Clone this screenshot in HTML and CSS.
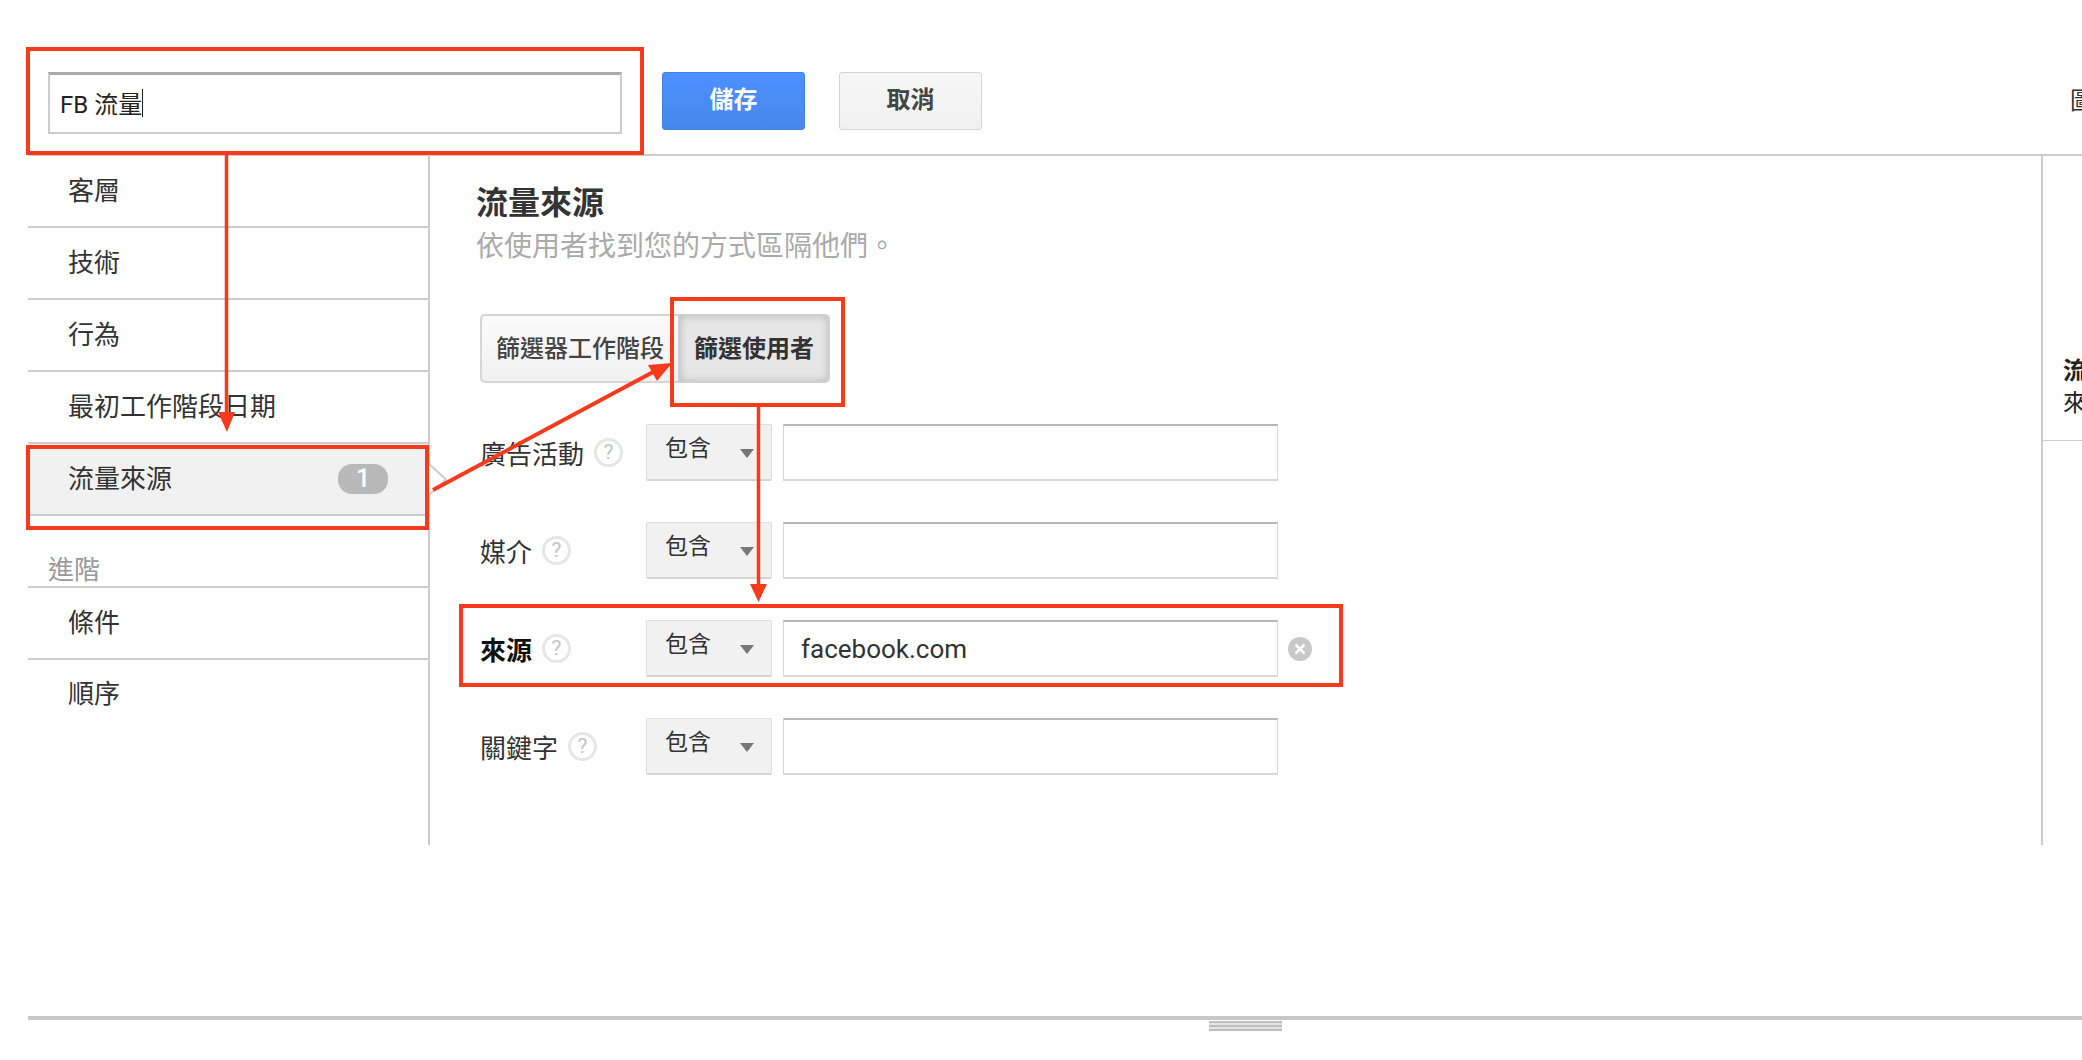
FILE: index.html
```html
<!DOCTYPE html>
<html>
	<head>
		<meta charset="utf-8">
		<title>區隔 - 流量來源</title>
		<link rel="stylesheet" href="styles.css">
	</head>
	<body>
		<div class="topbar">
			<div class="name-input">FB 流量<span class="caret"></span></div>
			<div class="btn btn-save">儲存</div>
			<div class="btn btn-cancel">取消</div>
			<div class="top-cut">圖表</div>
		</div>
		<div class="content">
			<div class="sidebar">
				<div class="side-item">客層</div>
				<div class="side-item">技術</div>
				<div class="side-item">行為</div>
				<div class="side-item">最初工作階段日期</div>
				<div class="side-item selected">
					流量來源
					<span class="badge">1</span>
					<svg class="pointer" width="20" height="35" viewBox="0 0 20 35">
						<polyline points="0,1 18,17.5 0,34" fill="#fff" stroke="#ccc" stroke-width="2"/>
					</svg>
				</div>
				<div class="side-heading">進階</div>
				<div class="side-item">條件</div>
				<div class="side-item last">順序</div>
			</div>
			<div class="main">
				<h1 class="title">流量來源</h1>
				<p class="subtitle">依使用者找到您的方式區隔他們。</p>
				<div class="segmented">
					<div class="seg seg-sessions">篩選器工作階段</div>
					<div class="seg seg-users">篩選使用者</div>
				</div>
				<div class="rows">
					<div class="row">
						<div class="label">廣告活動<span class="help">?</span></div>
						<div class="select">包含<span class="arrow"></span></div>
						<div class="text-input"></div>
					</div>
					<div class="row">
						<div class="label">媒介<span class="help">?</span></div>
						<div class="select">包含<span class="arrow"></span></div>
						<div class="text-input"></div>
					</div>
					<div class="row">
						<div class="label active">來源<span class="help">?</span></div>
						<div class="select">包含<span class="arrow"></span></div>
						<div class="text-input">facebook.com</div>
						<svg class="clear" width="24" height="24" viewBox="0 0 24 24">
							<circle cx="12" cy="12" r="12" fill="#c8c8c8"/>
							<path d="M7.5 7.5l9 9M16.5 7.5l-9 9" stroke="#fff" stroke-width="2.5"/>
						</svg>
					</div>
					<div class="row">
						<div class="label">關鍵字<span class="help">?</span></div>
						<div class="select">包含<span class="arrow"></span></div>
						<div class="text-input"></div>
					</div>
				</div>
			</div>
			<div class="summary">
				<div class="summary-block">
					<div class="summary-name">流量來源</div>
					<div>來源</div>
				</div>
			</div>
		</div>
		<div class="resize-bar"></div>
		<div class="grip"></div>

		<!-- red annotations drawn over the page -->
		<svg class="notes" width="2082" height="1060" viewBox="0 0 2082 1060">
			<g fill="none" stroke="#f63a1c" stroke-width="4">
				<rect x="28" y="49" width="614" height="104"/>
				<rect x="28" y="447" width="399" height="81"/>
				<rect x="672" y="299" width="171" height="106"/>
				<rect x="461" y="606" width="880" height="79"/>
				<path d="M226.500 154V415" stroke-width="3.500"/>
				<path d="M433 490L655 371" stroke-width="4"/>
				<path d="M758.500 406V586" stroke-width="3.500"/>
			</g>
			<g fill="#f63a1c">
				<polygon points="218,412 235,412 227,432"/>
				<polygon points="672,363 657,381 648,365"/>
				<polygon points="750,584 767,584 758.500,602"/>
			</g>
		</svg>
	</body>
</html>
```

FILE: styles.css
```css
html {
	background-color: white;
}
body {
	margin: 0px;
	width: 2082px;
	height: 1060px;
	overflow: hidden;
	position: relative;
	color: #333333;
	font-family: Roboto, "Noto Sans CJK TC", sans-serif;
	font-size: 26px;
}

/* top bar */
.topbar {
	display: flex;
	align-items: flex-start;
	box-sizing: border-box;
	height: 156px;
	margin-left: 28px;
	padding: 72px 0px 0px 20px;
	border-bottom: 2px solid #cccccc;
}
.name-input {
	display: flex;
	align-items: center;
	box-sizing: border-box;
	width: 574px;
	height: 62px;
	padding: 0px 0px 2px 10px;
	border: 2px solid #cccccc;
	border-top: 3px solid #aaaaaa;
	font-size: 24px;
	color: #222222;
}
.caret {
	width: 1px;
	height: 28px;
	background-color: #222222;
}
.btn {
	box-sizing: border-box;
	width: 143px;
	height: 58px;
	line-height: 54px;
	border-radius: 3px;
	text-align: center;
	font-size: 24px;
	font-weight: 700;
}
.btn-save {
	margin-left: 40px;
	background-image: linear-gradient(#4d90fe, #4787ed);
	border: 1px solid #3f7fe0;
	color: white;
}
.btn-cancel {
	margin-left: 34px;
	background-image: linear-gradient(#f6f6f6, #f1f1f1);
	border: 1px solid #d4d4d4;
	color: #444444;
}
.top-cut {
	width: 12px;
	margin-left: auto;
	margin-top: 9px;
	overflow: hidden;
	white-space: nowrap;
	font-size: 24px;
}

/* three columns */
.content {
	display: flex;
	height: 689px;
	margin-left: 28px;
}
.sidebar {
	box-sizing: border-box;
	width: 402px;
	border-right: 2px solid #cccccc;
}
.side-item {
	position: relative;
	display: flex;
	align-items: center;
	box-sizing: border-box;
	height: 72px;
	padding: 0px 0px 5px 40px;
	border-bottom: 2px solid #cccccc;
}
.side-item.selected {
	background-color: #f1f1f1;
}
.side-item.last {
	padding-bottom: 9px;
	border-bottom: 0px;
}
.badge {
	position: absolute;
	left: 310px;
	top: 20px;
	width: 50px;
	height: 30px;
	line-height: 30px;
	border-radius: 14px;
	background-color: #b9b9b9;
	color: white;
	text-align: center;
	font-size: 25px;
	font-weight: 500;
}
.pointer {
	position: absolute;
	left: 400px;
	top: 18px;
}
.side-heading {
	box-sizing: border-box;
	height: 72px;
	padding: 36px 0px 0px 20px;
	line-height: 36px;
	border-bottom: 2px solid #cccccc;
	color: #999999;
}

/* form in the middle */
.main {
	flex: 1;
	padding: 27px 0px 0px 46px;
}
.title {
	margin: 0px;
	line-height: 40px;
	font-size: 32px;
	font-weight: 700;
}
.subtitle {
	margin: 4px 0px 0px 0px;
	line-height: 40px;
	font-size: 28px;
	font-weight: 400;
	color: #aaaaaa;
}
.segmented {
	display: flex;
	height: 69px;
	margin: 47px 0px 0px 4px;
	font-size: 24px;
}
.seg {
	box-sizing: border-box;
	line-height: 67px;
	text-align: center;
}
.seg-sessions {
	width: 198px;
	background-image: linear-gradient(#fbfbfb, #f1f1f1);
	border: 2px solid #d6d6d6;
	border-right: 0px;
	border-radius: 5px 0px 0px 5px;
	color: #444444;
	font-weight: 500;
}
.seg-users {
	width: 152px;
	background-color: #e6e6e6;
	border: 2px solid #cfcfcf;
	border-radius: 0px 5px 5px 0px;
	box-shadow: inset 0px 0px 8px rgba(0, 0, 0, 0.2);
	font-weight: 700;
}
.rows {
	display: flex;
	flex-direction: column;
	gap: 41px;
	margin: 41px 0px 0px 4px;
}
.row {
	display: flex;
	align-items: center;
	height: 57px;
}
.label {
	display: flex;
	align-items: center;
	width: 166px;
}
.label.active {
	color: #111111;
	font-weight: 700;
}
.help {
	box-sizing: border-box;
	width: 29px;
	height: 29px;
	margin-left: 10px;
	line-height: 23px;
	border: 3px solid #e6e6e6;
	border-radius: 50%;
	text-align: center;
	font-size: 21px;
	font-weight: 400;
	color: #c4c4c4;
}
.select {
	position: relative;
	box-sizing: border-box;
	width: 126px;
	height: 57px;
	padding-left: 18px;
	line-height: 48px;
	background-color: #f1f1f1;
	border: 1px solid #dddddd;
	border-bottom: 2px solid #d4d4d4;
	border-radius: 2px;
	font-size: 23px;
}
.arrow {
	position: absolute;
	left: 93px;
	top: 24px;
	border-top: 9px solid #777777;
	border-left: 7px solid transparent;
	border-right: 7px solid transparent;
}
.text-input {
	box-sizing: border-box;
	width: 495px;
	height: 57px;
	margin-left: 11px;
	padding-left: 17px;
	line-height: 54px;
	border: 1px solid #d8d8d8;
	border-top: 2px solid #b8b8b8;
	border-bottom: 2px solid #d8d8d8;
}
.clear {
	margin-left: 10px;
}

/* cut off column on the right */
.summary {
	box-sizing: border-box;
	width: 41px;
	border-left: 2px solid #cccccc;
	overflow: hidden;
}
.summary-block {
	box-sizing: border-box;
	width: 100%;
	height: 285px;
	padding: 199px 0px 0px 20px;
	border-bottom: 1px solid #cccccc;
	line-height: 32px;
	font-size: 24px;
	white-space: nowrap;
	color: #222222;
}
.summary-name {
	font-weight: 700;
}

/* bottom resize handle */
.resize-bar {
	height: 4px;
	margin: 171px 0px 0px 28px;
	background-color: #c8c8c8;
}
.grip {
	width: 73px;
	height: 10px;
	margin: 1px 0px 0px 1209px;
	background-image: repeating-linear-gradient(#bfbfbf 0px, #bfbfbf 2px, #e2e2e2 2px, #e2e2e2 4px);
}

.notes {
	position: absolute;
	left: 0px;
	top: 0px;
	pointer-events: none;
}
```
